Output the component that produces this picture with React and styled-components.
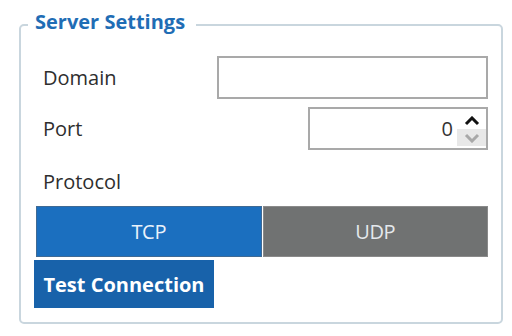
import React from "react";
import styled, { createGlobalStyle } from "styled-components";

const GlobalStyle = createGlobalStyle`
	html, body {
		margin: 0;
		padding: 0;
		background: #ffffff;
	}
	body {
		font-family: "Open Sans", "Liberation Sans", sans-serif;
		color: #333333;
	}
`;

const Page = styled.div`
	width: 512px;
	height: 336px;
	padding: 8px 9px 12px 19px;
	box-sizing: border-box;
`;

const Group = styled.fieldset`
	margin: 0;
	height: 316px;
	box-sizing: border-box;
	border: 2px solid #c9d6de;
	border-radius: 5px;
	padding: 0 13px 14px 15px;
	display: flex;
	flex-direction: column;
`;

const Legend = styled.legend`
	margin-left: -8px;
	padding: 0 11px 6px 7px;
	font-size: 20px;
	line-height: 28px;
	font-weight: 700;
	color: #1f6db5;
`;

const Fields = styled.div`
	display: flex;
	flex-direction: column;
	gap: 8px;
	margin-top: 14px;
`;

const Row = styled.div`
	display: flex;
	align-items: center;
	justify-content: space-between;
	height: ${({ $h }) => $h || 43}px;
`;

const Label = styled.span`
	padding-left: 7px;
	font-size: 20px;
	line-height: 28px;
	color: #2e2e2e;
`;

const TextBox = styled.input`
	width: 271px;
	height: 43px;
	box-sizing: border-box;
	border: 2px solid #a9a9a9;
	background: #ffffff;
	padding: 0 8px;
	font: inherit;
	font-size: 20px;
	outline: none;
`;

const NumberBox = styled.div`
	width: 180px;
	height: 43px;
	box-sizing: border-box;
	border: 2px solid #a9a9a9;
	display: flex;
	align-items: stretch;
	background: #ffffff;
`;

const NumberInput = styled.input`
	flex: 1;
	min-width: 0;
	border: none;
	outline: none;
	background: transparent;
	text-align: right;
	padding: 0 4px 0 0;
	font: inherit;
	font-size: 20px;
	color: #333333;
`;

const Spinner = styled.div`
	width: 29px;
	display: flex;
	flex-direction: column;
	padding: 3px 0 2px;
`;

const SpinButton = styled.button`
	flex: 1;
	border: none;
	padding: 0;
	margin: 0;
	display: flex;
	align-items: center;
	justify-content: center;
	background: ${({ $down }) => ($down ? "#e8e8e8" : "transparent")};
	cursor: pointer;
`;

const Toggle = styled.div`
	display: flex;
	gap: 1px;
	height: 51px;
`;

const ToggleButton = styled.button`
	flex: 1;
	border: 1px solid ${({ $active }) => ($active ? "#3f6a94" : "#8a8a8a")};
	background: ${({ $active }) => ($active ? "#1b6fbf" : "#707272")};
	color: ${({ $active }) => ($active ? "#eaf2fb" : "#e4e8ec")};
	font-family: "Open Sans", "Liberation Sans", sans-serif;
	font-size: 20px;
	letter-spacing: -0.3px;
	cursor: pointer;
`;

const TestButton = styled.button`
	align-self: flex-start;
	margin: 3px 0 0 -2px;
	width: 180px;
	height: 48px;
	border: none;
	background: #1862aa;
	color: #ffffff;
	font-family: "Open Sans", "Liberation Sans", sans-serif;
	font-size: 20px;
	font-weight: 700;
	padding: 0;
	cursor: pointer;
`;

const Chevron = ({ up, color }) => (
	<svg width="16" height="10" viewBox="0 0 16 10">
		<path
			d={up ? "M2 8 L8 2 L14 8" : "M2 2 L8 8 L14 2"}
			fill="none"
			stroke={color}
			strokeWidth="3"
			strokeLinejoin="miter"
		/>
	</svg>
);

export default function App() {
	return (
		<>
			<GlobalStyle />
			<Page>
				<Group>
					<Legend>Server Settings</Legend>
					<Fields>
						<Row>
							<Label>Domain</Label>
							<TextBox defaultValue="" />
						</Row>
						<Row>
							<Label>Port</Label>
							<NumberBox>
								<NumberInput defaultValue="0" />
								<Spinner>
									<SpinButton>
										<Chevron up color="#111111" />
									</SpinButton>
									<SpinButton $down>
										<Chevron color="#a8a8a8" />
									</SpinButton>
								</Spinner>
							</NumberBox>
						</Row>
						<Row $h={48}>
							<Label>Protocol</Label>
						</Row>
					</Fields>
					<Toggle>
						<ToggleButton $active>TCP</ToggleButton>
						<ToggleButton>UDP</ToggleButton>
					</Toggle>
					<TestButton>Test Connection</TestButton>
				</Group>
			</Page>
		</>
	);
}
